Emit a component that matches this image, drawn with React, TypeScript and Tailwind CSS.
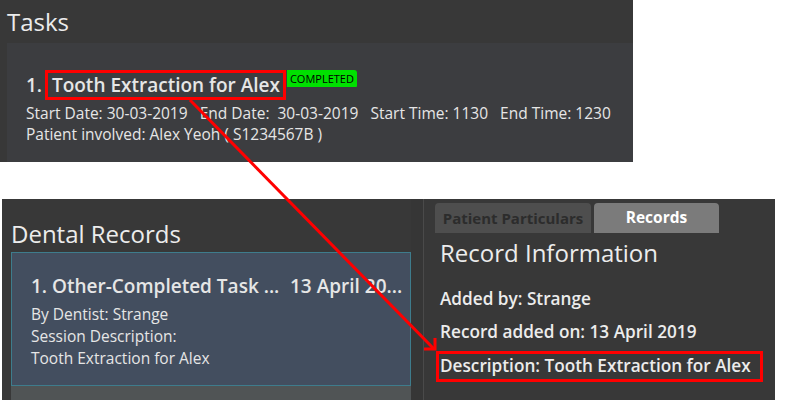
import React from "react";

const font = { fontFamily: '"Open Sans", "Noto Sans", sans-serif' };

export default function App() {
  return (
    <div className="relative w-[800px] h-[400px] bg-white overflow-hidden" style={font}>
      {/* Top: Tasks panel */}
      <div className="w-[633px] h-[162px] bg-[#383838] flex flex-col">
        <div className="h-[43px] flex items-center pl-[7px]">
          <span className="text-[24px] leading-none text-[#ececec]">Tasks</span>
        </div>
        <div className="ml-[7px] flex-1 bg-[#3c3d40] pl-[19px] pt-[29px] text-[#e6e6e6]">
          <div className="flex items-start">
            <span className="text-[19px] leading-[26px] font-semibold">1.&nbsp;&nbsp;Tooth Extraction for Alex</span>
            <span className="ml-[7px] mt-[-2px] bg-[#00e000] text-black text-[11px] leading-[17px] px-[3px] rounded-tr-[3px] rounded-br-[1px]">COMPLETED</span>
          </div>
          <div className="text-[15.5px] leading-[22px] whitespace-pre mt-[4px]">
            Start Date: 30-03-2019   End Date:  30-03-2019   Start Time: 1130   End Time: 1230
          </div>
          <div className="text-[15.5px] leading-[20px]">Patient involved: Alex Yeoh ( S1234567B )</div>
        </div>
      </div>

      {/* Bottom: Dental records */}
      <div className="mt-[37px] ml-[2px] w-[773px] h-[201px] bg-[#383838] flex">
        <div className="w-[409px] flex flex-col pl-[9px]">
          <div className="h-[53px] flex items-end pb-[6px]">
            <span className="text-[24px] leading-none text-[#ececec]">Dental Records</span>
          </div>
          <div className="flex-1 flex flex-col">
            <div className="h-[134px] bg-[#434e5f] border border-[#3e7c8c] pl-[19px] pt-[20px] text-[#e6e6e6]">
              <div className="flex text-[19px] leading-[26px] font-semibold">
                <span className="w-[259px]">1. Other-Completed Task ...</span>
                <span>13 April 20...</span>
              </div>
              <div className="text-[15.5px] leading-[22px] mt-[4px]">By Dentist: Strange</div>
              <div className="text-[15.5px] leading-[22px]">Session Description:</div>
              <div className="text-[15.5px] leading-[22px]">Tooth Extraction for Alex</div>
            </div>
            <div className="flex-1 bg-[#505455]" />
          </div>
        </div>
        <div className="w-[12px] bg-[#363636]" />
        <div className="w-[1px] bg-[#4a4a4a]" />
        <div className="flex-1 flex flex-col pl-[11px]">
          <div className="flex gap-[3px] pt-[4px]">
            <div className="w-[156px] h-[30px] bg-[#4e4e4e] rounded-t-[4px] flex items-center justify-center text-[15px] font-bold text-[#2c2c2c]">
              Patient Particulars
            </div>
            <div className="w-[125px] h-[30px] bg-[#7b7b7b] rounded-t-[4px] flex items-center justify-center text-[15.5px] font-bold text-white">
              Records
            </div>
          </div>
          <div className="pl-[5px] text-[#ececec]">
            <div className="text-[24px] leading-[36px] mt-[2px]">Record Information</div>
            <div className="text-[17.2px] font-semibold leading-[22px] mt-[17px]">Added by: Strange</div>
            <div className="text-[17.2px] font-semibold leading-[22px] mt-[11px]">Record added on: 13 April 2019</div>
            <div className="text-[17.2px] font-semibold leading-[22px] mt-[12px]">Description: Tooth Extraction for Alex</div>
          </div>
        </div>
      </div>

      {/* Annotations */}
      <div className="absolute left-[45px] top-[70px] w-[241px] h-[30px] border-[3px] border-[#ff0000]" />
      <div className="absolute left-[436px] top-[351px] w-[327px] h-[31px] border-[3px] border-[#ff0000]" />
      <svg className="absolute left-0 top-0" width="800" height="400" viewBox="0 0 800 400">
        <line x1="190" y1="100" x2="434" y2="349" stroke="#ff0000" strokeWidth="3" />
        <polyline points="424,349 435,349 435,338" fill="none" stroke="#ff0000" strokeWidth="3" />
      </svg>
    </div>
  );
}
